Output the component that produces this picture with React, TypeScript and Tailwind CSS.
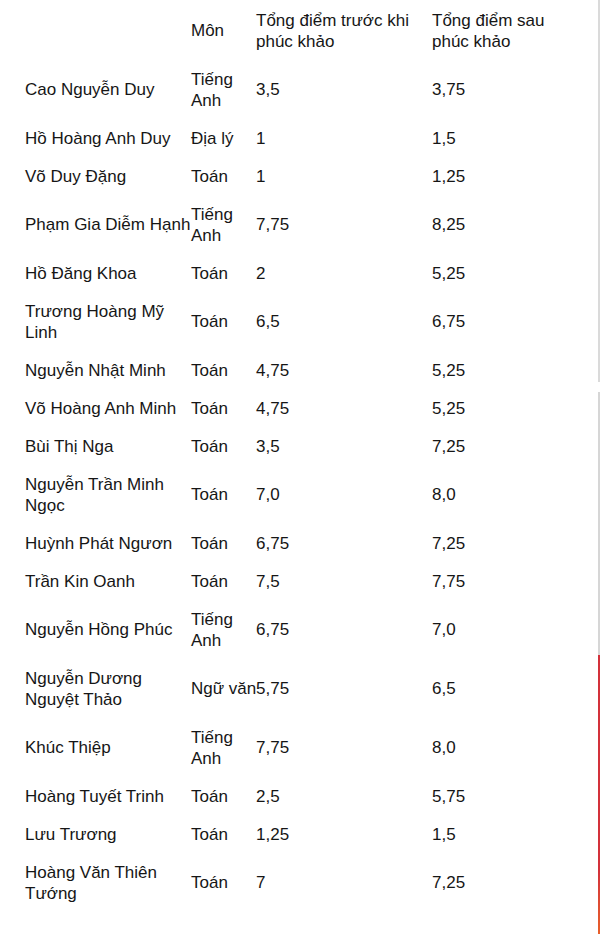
import React from "react";

type Row = {
  name: string[];
  subject: string[];
  before: string;
  after: string;
};

const rows: Row[] = [
  { name: ["Cao Nguyễn Duy"], subject: ["Tiếng", "Anh"], before: "3,5", after: "3,75" },
  { name: ["Hồ Hoàng Anh Duy"], subject: ["Địa lý"], before: "1", after: "1,5" },
  { name: ["Võ Duy Đặng"], subject: ["Toán"], before: "1", after: "1,25" },
  { name: ["Phạm Gia Diễm Hạnh"], subject: ["Tiếng", "Anh"], before: "7,75", after: "8,25" },
  { name: ["Hồ Đăng Khoa"], subject: ["Toán"], before: "2", after: "5,25" },
  { name: ["Trương Hoàng Mỹ", "Linh"], subject: ["Toán"], before: "6,5", after: "6,75" },
  { name: ["Nguyễn Nhật Minh"], subject: ["Toán"], before: "4,75", after: "5,25" },
  { name: ["Võ Hoàng Anh Minh"], subject: ["Toán"], before: "4,75", after: "5,25" },
  { name: ["Bùi Thị Nga"], subject: ["Toán"], before: "3,5", after: "7,25" },
  { name: ["Nguyễn Trần Minh", "Ngọc"], subject: ["Toán"], before: "7,0", after: "8,0" },
  { name: ["Huỳnh Phát Ngươn"], subject: ["Toán"], before: "6,75", after: "7,25" },
  { name: ["Trần Kin Oanh"], subject: ["Toán"], before: "7,5", after: "7,75" },
  { name: ["Nguyễn Hồng Phúc"], subject: ["Tiếng", "Anh"], before: "6,75", after: "7,0" },
  { name: ["Nguyễn Dương", "Nguyệt Thảo"], subject: ["Ngữ văn"], before: "5,75", after: "6,5" },
  { name: ["Khúc Thiệp"], subject: ["Tiếng", "Anh"], before: "7,75", after: "8,0" },
  { name: ["Hoàng Tuyết Trinh"], subject: ["Toán"], before: "2,5", after: "5,75" },
  { name: ["Lưu Trương"], subject: ["Toán"], before: "1,25", after: "1,5" },
  { name: ["Hoàng Văn Thiên", "Tướng"], subject: ["Toán"], before: "7", after: "7,25" },
];

const Lines: React.FC<{ lines: string[] }> = ({ lines }) => (
  <div className="flex flex-col">
    {lines.map((l, i) => (
      <span key={i} className="whitespace-nowrap">
        {l}
      </span>
    ))}
  </div>
);

const Cell: React.FC<{ children: React.ReactNode }> = ({ children }) => (
  <div className="flex items-center py-[8.5px]">{children}</div>
);

export default function App() {
  return (
    <div className="flex h-[934px] w-[600px] bg-white overflow-hidden">
      <div
        className="flex-1 pt-[1px] pl-[25px] text-[17px] leading-[21px] text-[#161616]"
        style={{ fontFamily: '"Liberation Sans", Arial, sans-serif' }}
      >
        <div className="grid grid-cols-[166px_65px_176px_1fr]">
          <Cell>
            <span />
          </Cell>
          <Cell>
            <Lines lines={["Môn"]} />
          </Cell>
          <Cell>
            <Lines lines={["Tổng điểm trước khi", "phúc khảo"]} />
          </Cell>
          <Cell>
            <Lines lines={["Tổng điểm sau", "phúc khảo"]} />
          </Cell>
          {rows.map((r, i) => (
            <React.Fragment key={i}>
              <Cell>
                <Lines lines={r.name} />
              </Cell>
              <Cell>
                <Lines lines={r.subject} />
              </Cell>
              <Cell>
                <span>{r.before}</span>
              </Cell>
              <Cell>
                <span>{r.after}</span>
              </Cell>
            </React.Fragment>
          ))}
        </div>
      </div>
      <div className="flex w-[2px] flex-col">
        <div className="h-[382px] bg-[#dadada]" />
        <div className="h-[10px] bg-white" />
        <div className="h-[263px] bg-[#d6d6d6]" />
        <div className="h-[215px] bg-[#d3313a]" />
        <div className="flex-1 bg-gradient-to-b from-[#d3313a] to-[#e8602a]" />
      </div>
    </div>
  );
}
